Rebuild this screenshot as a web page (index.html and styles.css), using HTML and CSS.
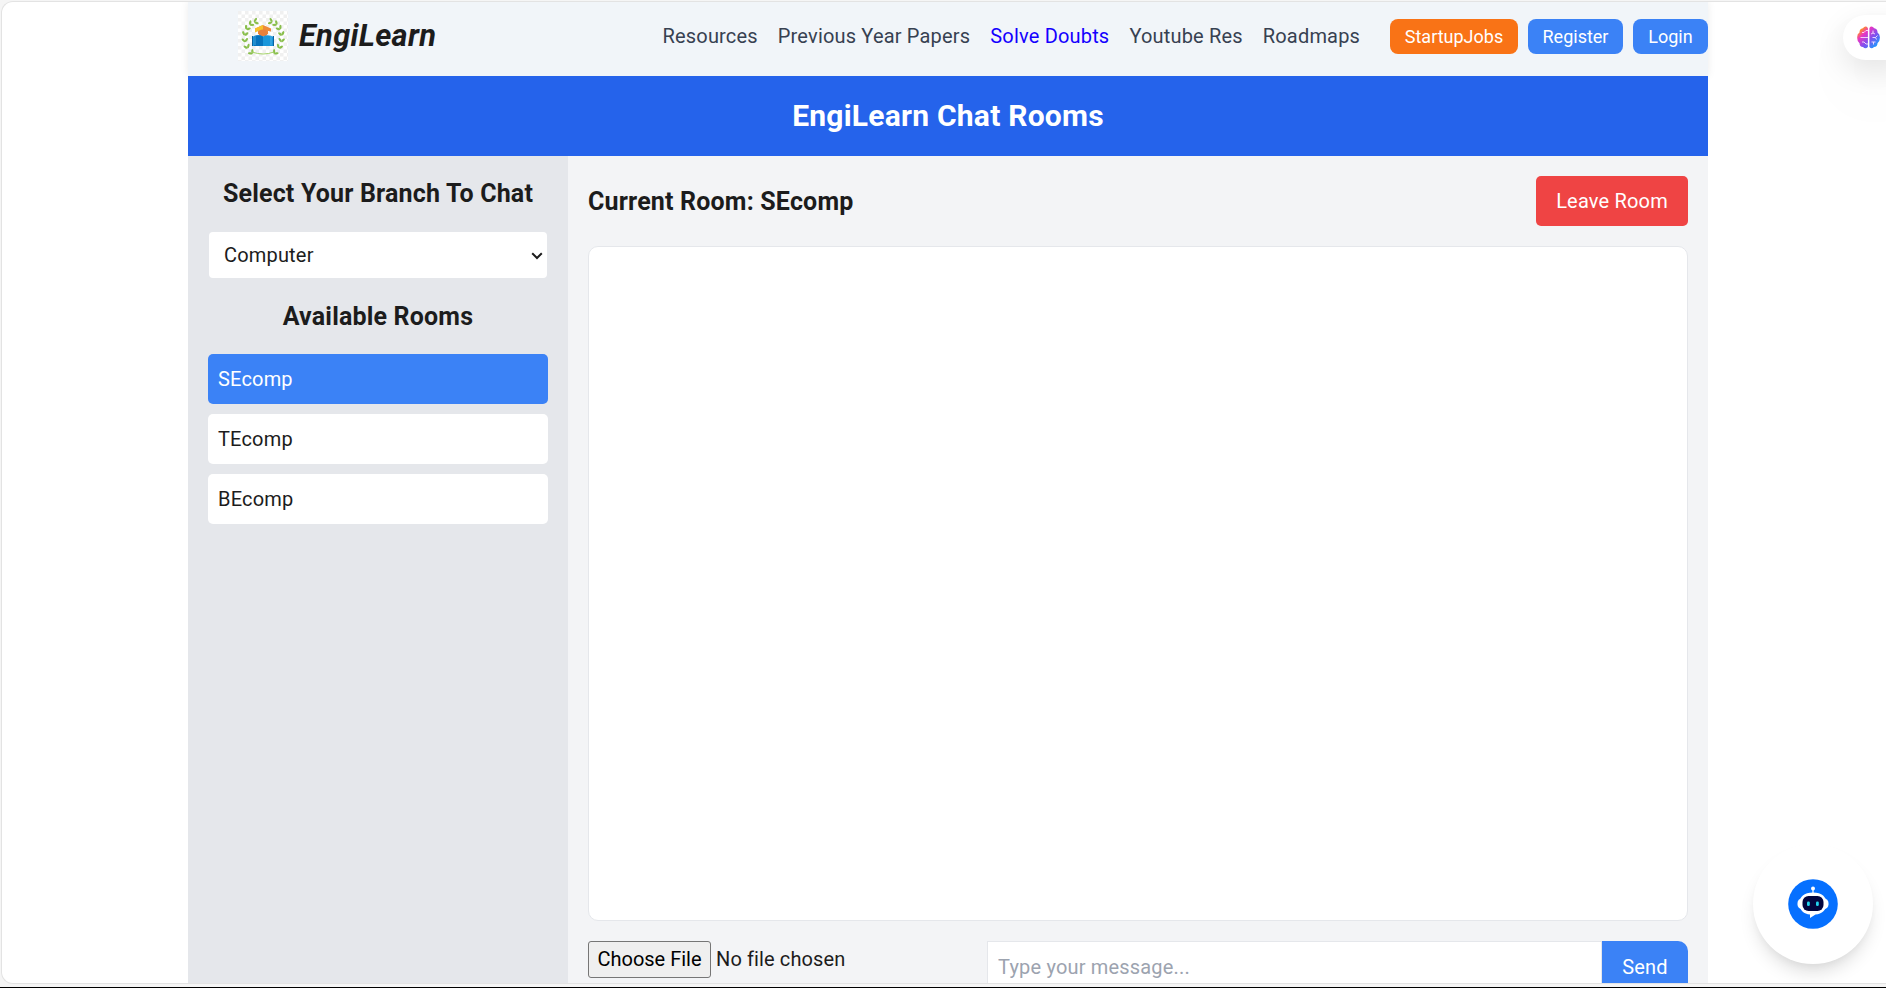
FILE: index.html
```html
<!DOCTYPE html>
<html lang="en">
<head>
<meta charset="utf-8">
<title>EngiLearn Chat Rooms</title>
<link rel="stylesheet" href="styles.css">
</head>
<body>
<div class="frame">
  <div class="page">
    <header class="header">
      <div class="brand">
        <svg class="brand-logo" viewBox="0 0 50 50">
          <defs>
            <pattern id="check" width="7" height="7" patternUnits="userSpaceOnUse">
              <rect width="7" height="7" fill="#fff"/>
              <rect width="3.5" height="3.5" fill="#f0f0f0"/>
              <rect x="3.5" y="3.5" width="3.5" height="3.5" fill="#f0f0f0"/>
            </pattern>
            <g id="leaf" fill="#8abf4c">
              <ellipse cx="-1.9" cy="0" rx="1.150" ry="2.300" transform="rotate(-38)"/>
              <ellipse cx="1.9" cy="0" rx="1.150" ry="2.300" transform="rotate(38)"/>
            </g>
            <g id="branch">
              <use href="#leaf" transform="translate(12.500 40.500) rotate(-42)"/>
              <use href="#leaf" transform="translate(8.500 34.500) rotate(-24)"/>
              <use href="#leaf" transform="translate(6.800 28) rotate(-6)"/>
              <use href="#leaf" transform="translate(7.300 21.500) rotate(14)"/>
              <use href="#leaf" transform="translate(10 16) rotate(34)"/>
              <use href="#leaf" transform="translate(14 12) rotate(52)"/>
              <use href="#leaf" transform="translate(19 10) rotate(70)"/>
            </g>
          </defs>
          <rect width="50" height="50" fill="url(#check)"/>
          <use href="#branch"/>
          <use href="#branch" transform="translate(50.500 0) scale(-1 1)"/>
          <path d="M14 41q11 4 22 0" fill="none" stroke="#a5d36a" stroke-width="1"/>
          <path d="M25 14l8 3.500v3l-3-.5v3H20v-3l-3 .5v-3z" fill="#ee8b38"/>
          <path d="M25 14l-8 3.500v4l3-1.500 5-1z" fill="#f6c12c"/>
          <ellipse cx="25" cy="22" rx="4.500" ry="3.500" fill="#e9803a"/>
          <path d="M14 26q6-3 11-.5Q30 23 36 26v9H14z" fill="#1a96da"/>
          <path d="M16 25q5-1.500 9 .5v9.500h-9z" fill="#0874bd"/>
          <path d="M14.500 25v10M35.500 25v10" stroke="#0b619e"/>
          <path d="M17 25v9M33 25v9" stroke="#72c2ec" stroke-width=".6"/>
        </svg>
        <span class="brand-name">EngiLearn</span>
      </div>
      <nav class="nav">
        <a>Resources</a>
        <a>Previous Year Papers</a>
        <a class="active">Solve Doubts</a>
        <a>Youtube Res</a>
        <a>Roadmaps</a>
      </nav>
      <div class="actions">
        <button class="pill pill-orange">StartupJobs</button>
        <button class="pill pill-register">Register</button>
        <button class="pill pill-login">Login</button>
      </div>
    </header>
    <div class="banner"><h1>EngiLearn Chat Rooms</h1></div>
    <div class="content">
      <aside class="sidebar">
        <h2>Select Your Branch To Chat</h2>
        <div class="select-wrap">
          <select class="branch-select"><option>Computer</option></select>
          <svg class="chevron" viewBox="0 0 12 8"><path d="M1.200 1.200L6 6l4.800-4.800" fill="none" stroke="#1c1c1c" stroke-width="2"/></svg>
        </div>
        <h2>Available Rooms</h2>
        <ul class="rooms">
          <li class="selected">SEcomp</li>
          <li>TEcomp</li>
          <li>BEcomp</li>
        </ul>
      </aside>
      <main class="chat">
        <div class="chat-head">
          <h2>Current Room: SEcomp</h2>
          <button class="leave">Leave Room</button>
        </div>
        <div class="messages"></div>
        <div class="composer">
          <input class="file" type="file">
          <input class="message" type="text" placeholder="Type your message...">
          <button class="send">Send</button>
        </div>
      </main>
    </div>
  </div>
  <div class="brain">
    <svg viewBox="0.5 0.5 23 23">
      <defs>
        <linearGradient id="brainfill" x1="0" y1="0" x2="1" y2="1">
          <stop offset="0" stop-color="#ff9a2e"/>
          <stop offset=".16" stop-color="#ff8a2e"/>
          <stop offset=".32" stop-color="#e936c4"/>
          <stop offset=".58" stop-color="#8150ee"/>
          <stop offset=".9" stop-color="#18a0ff"/>
        </linearGradient>
      </defs>
      <path d="M11.400 2.500v19Q9 24 6.500 21.500 3 21.500 3 17.800.5 16 .7 12 .5 8.500 3 7 2.800 3.500 6.300 2.800 9-.5 11.400 2.500zM12.900 2.500Q15-.5 17.800 2.800 21.200 3.500 21 7q2.500 1.500 2.400 5 .1 4-2.400 5.800 0 3.700-3.500 3.700-2.400 2.500-4.600 0z" fill="url(#brainfill)"/>
      <path d="M11.500 5H9.500L7.500 7H5.500M4 12h7.500M5.500 16.500h2l2 2h2M16.500 5v2.500l2 1M16.500 7.500l-2 1M16 12h3l2-2M19 12l1 2M15 16.500h4M17 16.500v2.500" fill="none" stroke="#f8dfff" stroke-width=".9"/>
    </svg>
  </div>
  <div class="bot">
    <svg viewBox="0 0 50 50">
      <circle cx="25" cy="25" r="24.800" fill="#0670ff"/>
      <circle cx="25" cy="9.500" r="2" fill="#fff"/>
      <path d="M25 10v5" stroke="#fff" stroke-width="1.200"/>
      <rect x="9.500" y="19.500" width="31" height="10.500" rx="4.500" fill="#fff"/>
      <path d="M25 13.500c9 0 13.500 4.500 13.500 11S34 35 27.500 35.500L22 39v-3.500c-6-.5-10.500-4-10.500-11s4.500-11 13.500-11z" fill="#fff"/>
      <rect x="14.500" y="17" width="21" height="15" rx="6" fill="#03063f"/>
      <rect x="19" y="22.500" width="2.800" height="4.500" rx="1.300" fill="#22d3ee"/>
      <rect x="28" y="22.500" width="2.800" height="4.500" rx="1.300" fill="#22d3ee"/>
    </svg>
  </div>
</div>
</body>
</html>
```
FILE: styles.css
```css
* { box-sizing: border-box; }
html { height: 100%; overflow: hidden; }
body {
  margin: 0;
  height: 988px;
  padding: 1px 0 3px 1px;
  overflow: hidden;
  background: #f5f5f5;
  border-bottom: 1px solid #000;
  font: 20px/30px Roboto, sans-serif;
  letter-spacing: 0.18px;
  color: #1c1c1c;
}
h1, h2 { margin: 0; font-weight: 700; white-space: nowrap; }
button { border: 0; font: inherit; letter-spacing: inherit; color: #fff; white-space: nowrap; }
.frame {
  position: relative;
  height: 983px;
  overflow: hidden;
  background: #fff;
  border: 1px solid #e3e3e3;
  border-right: 0;
  border-radius: 12px 0 0 12px;
}
.page { width: 1520px; margin-left: 186px; height: 100%; display: flex; flex-direction: column; }
.header {
  flex: none;
  height: 74px;
  padding: 9px 0 0 50px;
  display: flex;
  align-items: flex-start;
  background: #f1f5f9;
  box-shadow: 0 0 8px rgba(0, 0, 0, 0.08);
}
.brand { display: flex; gap: 11px; width: 424.5px; }
.brand-logo { width: 50px; height: 50px; }
.brand-name { font-size: 30.8px; line-height: 50px; font-weight: 700; font-style: italic; letter-spacing: 0.3px; }
.nav { display: flex; gap: 20px; padding-top: 10px; color: #374151; white-space: nowrap; }
.nav .active { color: #1400ff; }
.actions { display: flex; gap: 10px; margin-left: auto; padding-top: 8px; }
.pill { width: 128px; height: 35px; padding: 0; border-radius: 8px; background: #3b82f6; font-size: 18px; letter-spacing: 0; }
.pill-orange { background: #f97316; }
.pill-register { width: 95px; }
.pill-login { width: 75px; }
.banner { position: relative; flex: none; height: 80px; background: #2563eb; color: #fff; text-align: center; }
.banner h1 { font-size: 30px; line-height: 79px; letter-spacing: 0.23px; }
.content { flex: 1; min-height: 0; display: flex; }
.sidebar { width: 380px; padding: 20px; background: #e5e7eb; }
.sidebar h2 { font-size: 25px; line-height: 35px; text-align: center; }
.select-wrap { position: relative; margin: 21px 1px; }
.branch-select {
  display: block;
  width: 338px;
  height: 46px;
  padding: 0 0 0 15px;
  border: 0;
  border-radius: 4px;
  appearance: none;
  background-color: #fff;
  font: inherit;
  letter-spacing: inherit;
  color: inherit;
}
.chevron { position: absolute; right: 4px; top: 20px; width: 12px; height: 8px; }
.rooms { list-style: none; margin: 20px 0 0; padding: 0; display: grid; gap: 10px; }
.rooms li { height: 50px; padding: 10px; border-radius: 5px; background: #fff; }
.rooms .selected { background: #3b82f6; color: #fff; }
.chat { flex: 1; padding: 20px 20px 0; background: #f3f4f6; overflow: hidden; }
.chat-head { display: flex; justify-content: space-between; height: 50px; }
.chat-head h2 { font-size: 25px; line-height: 52px; }
.leave { width: 152px; height: 50px; padding: 0; border-radius: 5px; background: #ef4444; }
.messages { height: 675px; margin: 20px 0; background: #fff; border: 1px solid #e5e7eb; border-radius: 10px; }
.composer { display: flex; align-items: flex-start; }
.file { width: 399px; font: inherit; letter-spacing: 0.12px; color: inherit; }
.file::file-selector-button { width: 123px; height: 37px; padding: 0 0 1px; margin-right: 5px; font: inherit; letter-spacing: 0; border: 1px solid #767676; border-radius: 3px; background: #efefef; color: #000; }
.message { flex: 1; min-width: 0; height: 52px; padding: 0 10px; border: 1px solid #e5e7eb; font: inherit; letter-spacing: inherit; background: #fff; }
.message::placeholder { color: #9ca3af; }
.send { width: 86px; height: 52px; padding: 0; border-radius: 0 10px 10px 0; background: #3b82f6; }
.brain {
  position: absolute;
  left: 1841px;
  top: 13px;
  width: 60px;
  height: 45px;
  padding: 11px 0 0 14px;
  border-radius: 23px 0 0 23px;
  background: #fff;
  box-shadow: 0 10px 30px rgba(0, 0, 0, 0.1), 0 30px 80px rgba(0, 0, 0, 0.04);
}
.brain svg { display: block; width: 23px; height: 23px; }
.bot {
  position: absolute;
  left: 1751px;
  top: 842px;
  width: 120px;
  height: 120px;
  display: grid;
  place-items: center;
  border-radius: 50%;
  background: #fff;
  box-shadow: 0 12px 18px -4px rgba(0, 0, 0, 0.13), 0 5px 10px -4px rgba(0, 0, 0, 0.06);
}
.bot svg { width: 50px; height: 50px; }
```
